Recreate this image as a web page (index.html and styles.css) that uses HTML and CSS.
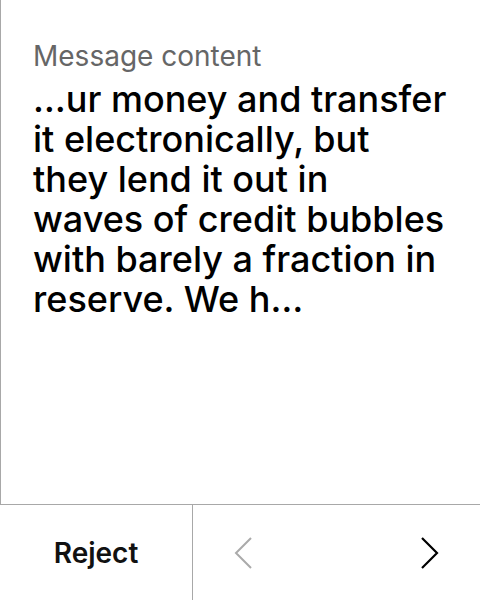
FILE: index.html
```html
<!DOCTYPE html>
<html>
<head>
<meta charset="utf-8">
<link rel="stylesheet" href="styles.css">
</head>
<body>
<div class="screen">
  <div class="content">
    <div class="label">Message content</div>
    <div class="message">…ur money and transfer<br>it electronically, but<br>they lend it out in<br>waves of credit bubbles<br>with barely a fraction in<br>reserve. We h…</div>
  </div>
  <div class="footer">
    <div class="reject">Reject</div>
    <div class="nav">
      <svg class="chev prev" width="48" height="48" viewBox="0 0 48 48"><path d="M32 9 L17 24 L32 39" fill="none" stroke="currentColor" stroke-width="2"/></svg>
      <svg class="chev next" width="48" height="48" viewBox="0 0 48 48"><path d="M16 9 L31 24 L16 39" fill="none" stroke="currentColor" stroke-width="2.2"/></svg>
    </div>
  </div>
</div>
</body>
</html>
```
FILE: styles.css
```css
html, body {
  margin: 0;
  padding: 0;
  background: #fff;
}
.screen {
  width: 480px;
  height: 600px;
  display: flex;
  flex-direction: column;
  font-family: Inter, "Noto Sans", sans-serif;
}
.content {
  height: 505px;
  flex: none;
  box-sizing: border-box;
  border-left: 1px solid #a8a8a8;
  border-bottom: 1px solid #a8a8a8;
  padding: 40px 0 0 32px;
}
.label {
  font-size: 28px;
  line-height: 32px;
  color: #666;
}
.message {
  font-size: 36px;
  line-height: 40px;
  font-weight: 500;
  color: #000;
  margin-top: 7px;
  white-space: nowrap;
}
.footer {
  flex: 1;
  display: flex;
}
.reject {
  width: 192px;
  border-right: 1px solid #a8a8a8;
  display: flex;
  align-items: center;
  justify-content: center;
  font-size: 28px;
  font-weight: 600;
  color: #111;
}
.nav {
  flex: 1;
  display: flex;
  align-items: center;
  justify-content: space-between;
  padding: 0 26px;
}
.chev { display: block; }
.prev { color: #aaa; }
.next { color: #000; }
```
